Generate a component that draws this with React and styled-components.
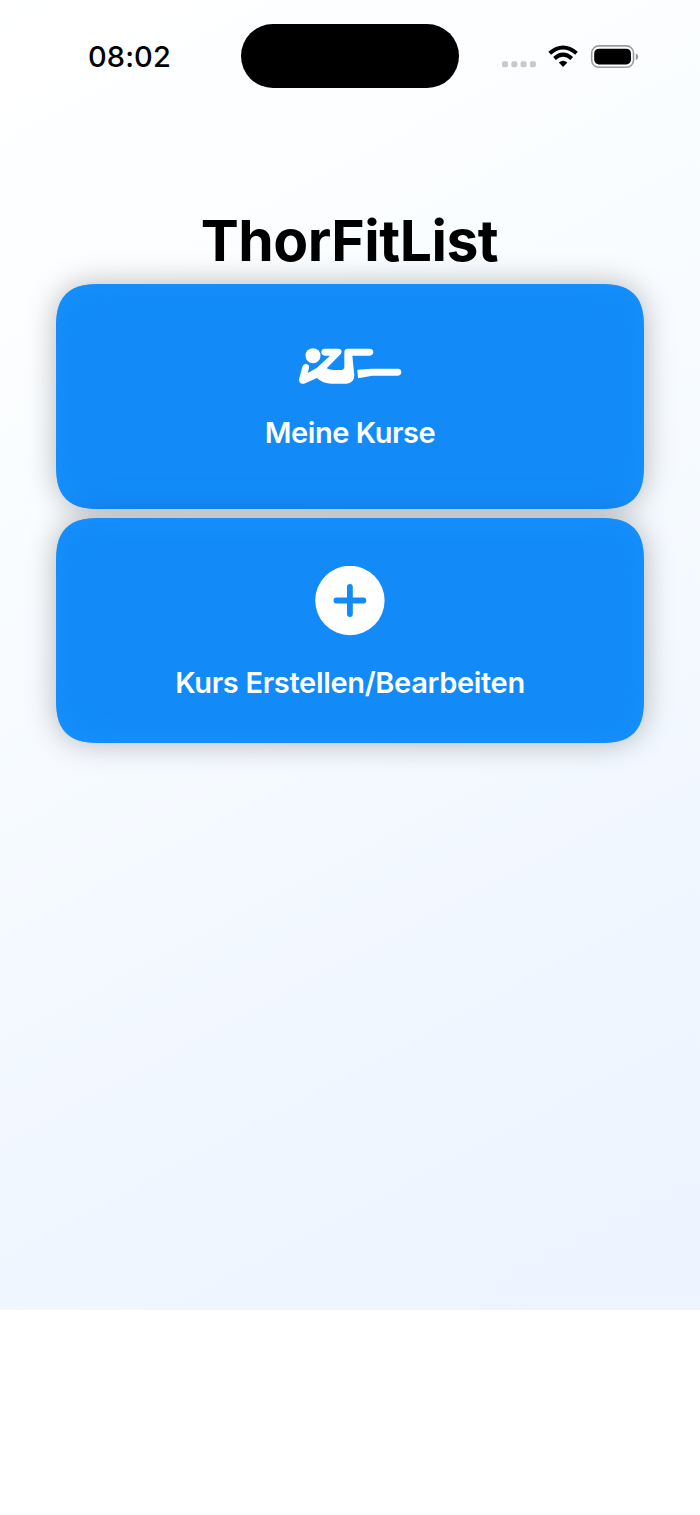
import React from 'react';
import styled, { createGlobalStyle } from 'styled-components';

const colors = {
  black: '#000',
  white: '#fff',
  blue: '#128bf8',
  blueEdge: '#1791ff',
};

const GlobalStyle = createGlobalStyle`
  *,
  *::before,
  *::after {
    box-sizing: border-box;
  }

  body {
    margin: 0;
    background-color: ${colors.white};
    font-family: Inter, 'Liberation Sans', sans-serif;
  }
`;

const Page = styled.div`
  min-height: 1515px;
  background-color: ${colors.white};
`;

const Screen = styled.div`
  height: 1310px;
  background: linear-gradient(152deg, #fff 0%, #fafdff 30%, #f1f7ff 72%, #edf4ff 100%);
`;

const StatusBar = styled.header`
  display: grid;
  grid-template-columns: 1fr 218px 1fr;
  align-items: center;
  height: 112px;
`;

const Time = styled.time`
  padding: 2px 0 0 88px;
  font-size: 29px;
  font-weight: 500;
  line-height: 34px;
  letter-spacing: 0.1px;
`;

const Island = styled.div`
  height: 64px;
  border-radius: 32px;
  background-color: ${colors.black};
`;

const StatusIcons = styled.div`
  display: flex;
  align-items: center;
  padding-left: 43px;

  svg {
    display: block;
  }
`;

const Main = styled.main`
  display: flex;
  flex-direction: column;
  align-items: center;
  padding: 93px 56px 0;
`;

const Title = styled.h1`
  margin: 0 0 7px;
  padding-right: 1px;
  height: 72px;
  font-size: 57px;
  font-weight: 700;
  line-height: 72px;
  letter-spacing: -0.5px;
  white-space: nowrap;
`;

const Menu = styled.nav`
  display: flex;
  flex-direction: column;
  gap: 9px;
  width: 100%;
`;

const Card = styled.button`
  display: flex;
  flex-direction: column;
  align-items: center;
  width: 100%;
  height: 225px;
  padding: ${({ $top }) => $top}px 0 0;
  border: 0;
  border-radius: 36px;
  background-color: ${colors.blue};
  box-shadow: 0 0 30px rgba(0, 0, 0, 0.28), inset 0 0 28px ${colors.blueEdge};
  color: ${colors.white};
  font-family: inherit;

  @supports (corner-shape: superellipse(1.5)) {
    border-radius: 46px;
    corner-shape: superellipse(1.5);
  }

  svg {
    display: block;
  }
`;

const Label = styled.span`
  margin-top: ${({ $gap }) => $gap}px;
  font-size: 29px;
  font-weight: 600;
  line-height: 36px;
  letter-spacing: ${({ $tracking }) => $tracking}px;
  white-space: nowrap;
`;

const StatusGlyphs = () => (
  <svg width="138" height="26" viewBox="0.5 -0.3 138 26" aria-hidden="true">
    <g fill="#c8c9cb">
      <rect x="0.5" y="18" width="6" height="6" rx="1.8" />
      <rect x="9.8" y="18" width="6" height="6" rx="1.8" />
      <rect x="19.1" y="18" width="6" height="6" rx="1.8" />
      <rect x="28.4" y="18" width="6" height="6" rx="1.8" />
    </g>
    <g fill="none" stroke="#000" strokeWidth="4">
      <path d="M48.2 10Q61.6 -1.6 75 10" />
      <path d="M53 15.2Q61.6 7.6 70.2 15.2" />
    </g>
    <path d="M57.3 19.2Q61.6 15.8 65.9 19.2L61.6 23.7Z" />
    <rect x="90.2" y="2.6" width="41.8" height="21.4" rx="7" fill="none" stroke="#9b9c9e" strokeWidth="1.6" />
    <rect x="92.7" y="5.4" width="36.8" height="15.8" rx="4.7" />
    <path d="M134.3 10.1Q136.8 11 136.8 13.5Q136.8 16 134.3 16.9Z" fill="#98999b" />
  </svg>
);

const SwimmerIcon = () => (
  <svg width="120" height="60" viewBox="0 0 360 180" fill="#fff" aria-hidden="true">
    <circle cx="69" cy="62" r="22.5" />
    <path d="M37 95Q40 86 49 87Q59 89 57 99L53 114L80 99L120 62H105Q94 61 94 51Q94 41 105 41H145Q159 43 153 56L110 100Q117 105 132 105H154Q163 104 163 96V51Q163 41 174 41H239Q250 42 250 51Q250 61 239 62H187L193 121Q192 144 171 146H125Q98 146 81 129L42 146Q26 148 27 133Z" />
    <path d="M202 104L245 101H324Q334 102 334 111Q334 121 324 122H247L204 130Z" />
  </svg>
);

const PlusIcon = () => (
  <svg width="70" height="70" viewBox="0.1 0.5 70 70" aria-hidden="true">
    <circle cx="35" cy="35" r="34.7" fill="#fff" />
    <path d="M35 21.5V48.5M21.5 35H48.5" stroke={colors.blue} strokeWidth="5.8" strokeLinecap="round" />
  </svg>
);

const App = () => (
  <Page>
    <GlobalStyle />
    <Screen>
      <StatusBar>
        <Time>08:02</Time>
        <Island />
        <StatusIcons>
          <StatusGlyphs />
        </StatusIcons>
      </StatusBar>
      <Main>
        <Title>ThorFitList</Title>
        <Menu>
          <Card type="button" $top={51}>
            <SwimmerIcon />
            <Label $gap={20} $tracking={-0.45}>Meine Kurse</Label>
          </Card>
          <Card type="button" $top={48}>
            <PlusIcon />
            <Label $gap={29} $tracking={-0.33}>Kurs Erstellen/Bearbeiten</Label>
          </Card>
        </Menu>
      </Main>
    </Screen>
  </Page>
);

export default App;
